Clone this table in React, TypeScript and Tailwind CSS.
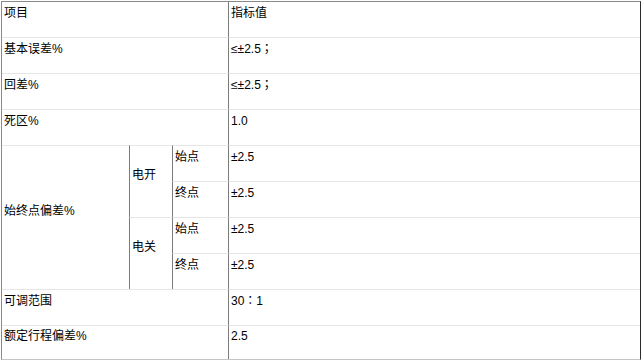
const font = { fontFamily: '"Liberation Sans", "Noto Sans CJK SC", sans-serif' }

type CellProps = {
  text: string
  className?: string
  punct?: boolean
}

// punct cells use a font whose full-width ：and ；sit centred, as in the picture
function Cell({ text, className = '', punct = false }: CellProps) {
  return (
    <div className={`flex items-center pl-[2px] text-[12px] text-black ${className}`}>
      <div
        className={`leading-[18px] pb-[14px] whitespace-nowrap ${punct ? 'font-["Liberation_Sans","Noto_Sans_CJK_TC",sans-serif]' : ''}`}
      >
        {text}
      </div>
    </div>
  )
}

const topRows = [
  ['项目', '指标值'],
  ['基本误差%', '≤±2.5；'],
  ['回差%', '≤±2.5；'],
  ['死区%', '1.0'],
]

const bottomRows = [
  ['可调范围', '30：1'],
  ['额定行程偏差%', '2.5'],
]

export default function App() {
  return (
    <div className="w-[644px] h-[362px] bg-white pt-[1px] pl-[1px]" style={font}>
      <div className="w-[640px] grid grid-cols-[127px_43px_56px_412px] grid-rows-[35px_repeat(8,36px)_34px] border-t border-l border-t-[#8a8a8a] border-l-[#8a8a8a] border-r border-r-[#2a2a2a] border-b border-b-[#c4c4c4]">
        {topRows.map(([k, v], i) => (
          <div key={k} className="contents">
            <Cell text={k} className={`col-span-3 ${i > 0 ? 'border-t border-[#e6e6e6]' : ''}`} />
            <Cell
              text={v}
              punct={v.includes('；')}
              className={`border-l border-l-[#7c7c7c] ${i > 0 ? 'border-t border-t-[#e6e6e6]' : ''}`}
            />
          </div>
        ))}

        {/* 始终点偏差 block */}
        <Cell text="始终点偏差%" className="row-span-4 border-t border-[#e6e6e6]" />
        <Cell text="电开" className="row-span-2 border-t border-t-[#e6e6e6] border-l border-l-[#7c7c7c]" />
        <Cell text="始点" className="border-t border-t-[#e6e6e6] border-l border-l-[#7c7c7c]" />
        <Cell text="±2.5" className="border-t border-t-[#e6e6e6] border-l border-l-[#7c7c7c]" />
        <Cell text="终点" className="border-t border-t-[#e6e6e6] border-l border-l-[#7c7c7c]" />
        <Cell text="±2.5" className="border-t border-t-[#e6e6e6] border-l border-l-[#7c7c7c]" />
        <Cell text="电关" className="row-span-2 border-t border-t-[#e6e6e6] border-l border-l-[#7c7c7c]" />
        <Cell text="始点" className="border-t border-t-[#e6e6e6] border-l border-l-[#7c7c7c]" />
        <Cell text="±2.5" className="border-t border-t-[#e6e6e6] border-l border-l-[#7c7c7c]" />
        <Cell text="终点" className="border-t border-t-[#e6e6e6] border-l border-l-[#7c7c7c]" />
        <Cell text="±2.5" className="border-t border-t-[#e6e6e6] border-l border-l-[#7c7c7c]" />

        {bottomRows.map(([k, v]) => (
          <div key={k} className="contents">
            <Cell text={k} className="col-span-3 border-t border-[#e6e6e6]" />
            <Cell
              text={v}
              punct={v.includes('：')}
              className="border-l border-l-[#7c7c7c] border-t border-t-[#e6e6e6]"
            />
          </div>
        ))}
      </div>
    </div>
  )
}
